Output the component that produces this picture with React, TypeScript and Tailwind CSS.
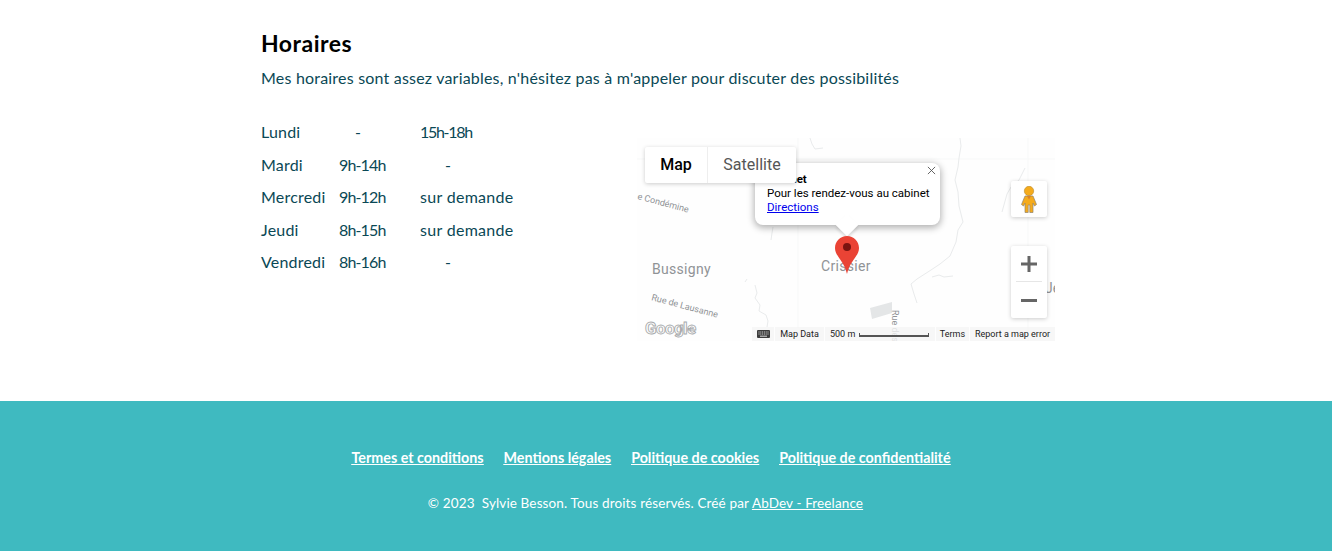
const rows = [
  ["Lundi", "-", "15h-18h"],
  ["Mardi", "9h-14h", "-"],
  ["Mercredi", "9h-12h", "sur demande"],
  ["Jeudi", "8h-15h", "sur demande"],
  ["Vendredi", "8h-16h", "-"],
] as const;

function MapArt() {
  return (
    <svg className="absolute inset-0" width="418" height="203" viewBox="0 0 418 203">
      <rect width="418" height="203" fill="#fefefe" />
      <g fill="none" stroke="#f7f8f8" strokeWidth="1">
        <path d="M0 21H418" />
        <path d="M161 0V190" />
        <path d="M391 0V203" />
      </g>
      <g fill="none" stroke="#e9ebec" strokeWidth="1">
        <path d="M173 0l2 6 3 5 8-1" />
        <path d="M136 89l-1 6-1 7" />
        <path d="M323 0l1 8-2 12-1 9-3 13 3 12 1 14 2 8 2 8-5 8-2 12-6 14-10 8-9 6-14 9-6 5 3 10 3 9" />
        <path d="M295 139l7-2 5 2 9-1" />
        <path d="M388 30l-6 12-8 7-4 7-5 18" />
        <path d="M118 147l2 8-2 5 5 7-1 6 7 4 2 6-1 6" />
        <path d="M108 144l2-3" />
      </g>
      <path d="M233 170l22-6v11l-20 6z" fill="#e4e6e7" />
      <g fill="#909396" style={{ fontFamily: "Roboto, sans-serif" }}>
        <text x="15" y="136" fontSize="14" letterSpacing=".3">Bussigny</text>
        <text x="184" y="133" fontSize="14" letterSpacing=".3">Crissier</text>
        <text x="0" y="61" fontSize="9" transform="rotate(15 0 61)">e Condémine</text>
        <text x="14" y="162" fontSize="9" transform="rotate(15 14 162)">Rue de Lausanne</text>
        <text x="255" y="172" fontSize="9" transform="rotate(90 255 172)">Rue des</text>
        <text x="408" y="155" fontSize="14">Je</text>
      </g>
      <text x="8" y="196" fontSize="17" fontWeight="700" fill="#fff" stroke="#a8aaac" strokeWidth=".9" style={{ fontFamily: "Roboto, sans-serif" }} letterSpacing="-.6">Google</text>
    </svg>
  );
}

function GoogleMap() {
  return (
    <div className="relative w-[418px] h-[203px] overflow-hidden shrink-0" style={{ fontFamily: "Roboto, sans-serif" }}>
      <MapArt />
      {/* Info window */}
      <div className="absolute left-[118px] top-[25px] w-[185px] h-[62px] bg-white rounded-[8px] shadow-[0_2px_7px_1px_rgba(0,0,0,0.3)] pl-[12px] pt-[9px] text-[11.5px] leading-[14px] text-black">
        <div className="font-bold">Cabinet</div>
        <div>Pour les rendez-vous au cabinet</div>
        <a className="text-[#0000ee] underline">Directions</a>
        <svg className="absolute right-[4px] top-[3px]" width="9" height="9" viewBox="0 0 10 10" stroke="#555" strokeWidth="1"><path d="M1 1l8 8M9 1l-8 8" /></svg>
        <div className="absolute left-[84px] top-[54px] w-[16px] h-[16px] bg-white rotate-45 shadow-[2px_2px_3px_rgba(0,0,0,0.12)]" />
      </div>
      {/* Map type control */}
      <div className="absolute left-[8px] top-[9px] flex h-[36px] bg-white rounded-[2px] shadow-[0_1px_4px_rgba(0,0,0,0.2)]">
        <div className="w-[63px] flex items-center justify-center text-[16px] font-medium text-black border-r border-[#eee]">Map</div>
        <div className="w-[88px] flex items-center justify-center text-[16px] text-[#565656]">Satellite</div>
      </div>
      {/* Marker */}
      <svg className="absolute left-[198px] top-[98px]" width="24" height="38" viewBox="0 0 24 38">
        <path d="M12 0C5.400 0 0 5.400 0 12c0 8.400 8.500 11.500 12 26 3.500-14.500 12-17.600 12-26C24 5.400 18.600 0 12 0z" fill="#ea4335" />
        <circle cx="12" cy="11" r="4" fill="#7b1410" />
      </svg>
      {/* Pegman */}
      <div className="absolute left-[374px] top-[43px] w-[36px] h-[36px] bg-white rounded-[2px] shadow-[0_1px_4px_rgba(0,0,0,0.2)] flex items-center justify-center">
        <svg width="16" height="27" viewBox="0 0 16 27">
          <circle cx="8" cy="5" r="4.700" fill="#f5ab1c" stroke="#b98a2a" strokeWidth=".6" />
          <path d="M4 10h8l3.500 8.500-2 1.500-1.500-3v9.500H8.800V19H7.200v7.500H4V17l-1.500 3-2-1.500z" fill="#f5ab1c" stroke="#8f8470" strokeWidth=".7" />
          <path d="M6 10l2 3.500 2-3.500z" fill="#d9822b" />
        </svg>
      </div>
      {/* Zoom */}
      <div className="absolute left-[374px] top-[108px] w-[36px] h-[72px] bg-white rounded-[2px] shadow-[0_1px_4px_rgba(0,0,0,0.2)]">
        <div className="h-[36px] flex items-center justify-center">
          <svg width="16" height="16" viewBox="0 0 16 16" fill="#666"><path d="M6.500 0h3v6.500H16v3H9.500V16h-3V9.500H0v-3h6.500z" /></svg>
        </div>
        <div className="mx-[5px] h-px bg-[#e6e6e6] -mt-[1px]" />
        <div className="h-[36px] flex items-center justify-center">
          <div className="w-[16px] h-[3px] bg-[#666]" />
        </div>
      </div>
      {/* Attribution */}
      <div className="absolute left-[115px] right-0 bottom-0 h-[14px] flex items-center gap-[1px] text-[9px] leading-[14px] text-[#222] whitespace-nowrap">
        <div className="w-[22px] h-full bg-[#f5f5f5]/80 flex items-center justify-center">
          <svg width="13" height="8" viewBox="0 0 13 8"><rect width="13" height="8" rx="1" fill="#3c3c3c" /><path d="M1.500 2h10M1.500 4h10" stroke="#fff" strokeWidth=".8" strokeDasharray="1 .8" /><path d="M3 6.200h7" stroke="#fff" strokeWidth=".8" /></svg>
        </div>
        <div className="w-[49px] h-full bg-[#f5f5f5]/80 text-center">Map Data</div>
        <div className="w-[110px] h-full bg-[#f5f5f5]/80 flex items-center pl-[5px]">
          <span>500 m</span>
          <span className="ml-[4px] w-[70px] h-[4px] border-x border-b-[2px] border-[#555] mt-[1px]" />
        </div>
        <div className="w-[33px] h-full bg-[#f5f5f5]/80 text-center">Terms</div>
        <div className="flex-1 h-full bg-[#f5f5f5]/80 text-center">Report a map error</div>
      </div>
    </div>
  );
}

export default function App() {
  return (
    <div className="w-[1332px] h-[551px] overflow-hidden bg-white flex flex-col" style={{ fontFamily: "Lato, sans-serif" }}>
      <main className="h-[401px] pl-[261px] pt-[30px]">
        <h2 className="text-[23px] leading-[26px] font-bold text-black tracking-[0.5px]">Horaires</h2>
        <p className="mt-[10px] text-[16px] leading-[24px] text-[#0a4855] tracking-[0.2px]">
          Mes horaires sont assez variables, n'hésitez pas à m'appeler pour discuter des possibilités
        </p>
        <div className="flex mt-[30px]">
          <div className="w-[376px] text-[16px] leading-[24px] text-[#0a4855] flex flex-col gap-[8.500px]">
            {rows.map((r) => (
              <div key={r[0]} className="grid grid-cols-[78px_81px_1fr] h-[24px]">
                <span className="tracking-[0.2px]">{r[0]}</span>
                <span className={r[1] === "-" ? "pl-[16px]" : "tracking-[-0.85px]"}>{r[1]}</span>
                <span className={r[2] === "-" ? "pl-[25px]" : r[2] === "sur demande" ? "tracking-[0.3px]" : "tracking-[-1.3px]"}>{r[2]}</span>
              </div>
            ))}
          </div>
          <div className="mt-[18px]"><GoogleMap /></div>
        </div>
      </main>
      <footer className="h-[150px] bg-[#3fbac0] text-white flex flex-col items-center">
        <nav className="mt-[47px] ml-[-30px] flex gap-[20px] text-[14.3px] leading-[20px] font-bold underline">
          <a>Termes et conditions</a>
          <a>Mentions légales</a>
          <a>Politique de cookies</a>
          <a>Politique de confidentialité</a>
        </nav>
        <p className="mt-[25px] ml-[-41px] text-[13.5px] leading-[20px] tracking-[0.13px] whitespace-pre">
          © 2023  Sylvie Besson. Tous droits réservés. Créé par <a className="underline">AbDev - Freelance</a>
        </p>
      </footer>
    </div>
  );
}
